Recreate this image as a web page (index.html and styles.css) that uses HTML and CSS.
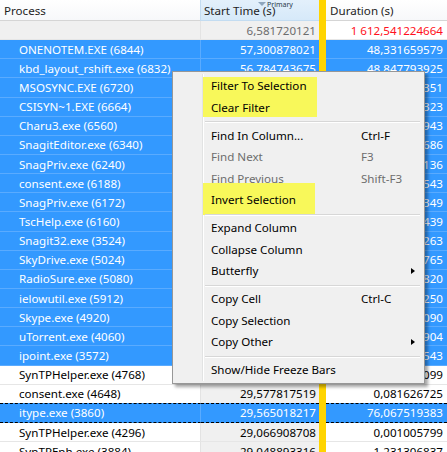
FILE: index.html
```html
<!DOCTYPE html>
<html>
<head>
<meta charset="utf-8">
<link rel="stylesheet" href="styles.css">
</head>
<body>
<div class="grid">
  <div class="hdr">
    <div class="c proc">Process</div>
    <div class="c start sorted">Start Time (s)<span class="sortind"><span class="tri"></span>Primary</span></div>
    <div class="freeze"></div>
    <div class="c dur">Duration (s)</div>
  </div>
  <div class="row summary">
    <div class="c proc"></div>
    <div class="c start num">6,581720121</div>
    <div class="freeze"></div>
    <div class="c dur num">1 612,541224664</div>
  </div>
  <div class="row sel"><div class="c proc">ONENOTEM.EXE (6844)</div><div class="c start num">57,300878021</div><div class="freeze"></div><div class="c dur num">48,331659579</div></div>
  <div class="row sel"><div class="c proc">kbd_layout_rshift.exe (6832)</div><div class="c start num">56,784743675</div><div class="freeze"></div><div class="c dur num">48,847793925</div></div>
  <div class="row sel"><div class="c proc">MSOSYNC.EXE (6720)</div><div class="c start num">56,412786530</div><div class="freeze"></div><div class="c dur num">49,219751351</div></div>
  <div class="row sel"><div class="c proc">CSISYN~1.EXE (6664)</div><div class="c start num">55,978120034</div><div class="freeze"></div><div class="c dur num">49,654417323</div></div>
  <div class="row sel"><div class="c proc">Charu3.exe (6560)</div><div class="c start num">53,817394260</div><div class="freeze"></div><div class="c dur num">51,815143943</div></div>
  <div class="row sel"><div class="c proc">SnagitEditor.exe (6340)</div><div class="c start num">50,104538112</div><div class="freeze"></div><div class="c dur num">55,527999686</div></div>
  <div class="row sel"><div class="c proc">SnagPriv.exe (6240)</div><div class="c start num">49,876012584</div><div class="freeze"></div><div class="c dur num">55,756525136</div></div>
  <div class="row sel"><div class="c proc">consent.exe (6188)</div><div class="c start num">48,511907326</div><div class="freeze"></div><div class="c dur num">1,093218543</div></div>
  <div class="row sel"><div class="c proc">SnagPriv.exe (6172)</div><div class="c start num">47,934201675</div><div class="freeze"></div><div class="c dur num">57,698335349</div></div>
  <div class="row sel"><div class="c proc">TscHelp.exe (6160)</div><div class="c start num">47,650883129</div><div class="freeze"></div><div class="c dur num">57,981654439</div></div>
  <div class="row sel"><div class="c proc">Snagit32.exe (3524)</div><div class="c start num">39,402716845</div><div class="freeze"></div><div class="c dur num">66,229820263</div></div>
  <div class="row sel"><div class="c proc">SkyDrive.exe (5024)</div><div class="c start num">36,715220409</div><div class="freeze"></div><div class="c dur num">68,917316765</div></div>
  <div class="row sel"><div class="c proc">RadioSure.exe (5080)</div><div class="c start num">35,118604377</div><div class="freeze"></div><div class="c dur num">70,513932820</div></div>
  <div class="row sel"><div class="c proc">ielowutil.exe (5912)</div><div class="c start num">33,260417998</div><div class="freeze"></div><div class="c dur num">72,372119250</div></div>
  <div class="row sel"><div class="c proc">Skype.exe (4920)</div><div class="c start num">32,870114502</div><div class="freeze"></div><div class="c dur num">72,762423090</div></div>
  <div class="row sel"><div class="c proc">uTorrent.exe (4060)</div><div class="c start num">31,447806211</div><div class="freeze"></div><div class="c dur num">74,184730904</div></div>
  <div class="row sel"><div class="c proc">ipoint.exe (3572)</div><div class="c start num">30,905543318</div><div class="freeze"></div><div class="c dur num">74,726993543</div></div>
  <div class="row"><div class="c proc">SynTPHelper.exe (4768)</div><div class="c start num">29,603419826</div><div class="freeze"></div><div class="c dur num">0,001043099</div></div>
  <div class="row"><div class="c proc">consent.exe (4648)</div><div class="c start num">29,577817519</div><div class="freeze"></div><div class="c dur num">0,081626725</div></div>
  <div class="row sel focus"><div class="c proc">itype.exe (3860)</div><div class="c start num">29,565018217</div><div class="freeze"></div><div class="c dur num">76,067519383</div></div>
  <div class="row"><div class="c proc">SynTPHelper.exe (4296)</div><div class="c start num">29,066908708</div><div class="freeze"></div><div class="c dur num">0,001005799</div></div>
  <div class="row"><div class="c proc">SynTPEnh.exe (3884)</div><div class="c start num">29,048893316</div><div class="freeze"></div><div class="c dur num">1,231306837</div></div>
</div>

<div class="menu">
  <div class="group mark">
    <div class="item"><span class="label">Filter To Selection</span></div>
    <div class="item"><span class="label">Clear Filter</span></div>
  </div>
  <div class="sep"></div>
  <div class="item"><span class="label">Find In Column...</span><span class="key">Ctrl-F</span></div>
  <div class="item dis"><span class="label">Find Next</span><span class="key">F3</span></div>
  <div class="item dis"><span class="label">Find Previous</span><span class="key">Shift-F3</span></div>
  <div class="group mark mark2">
    <div class="item"><span class="label">Invert Selection</span></div>
  </div>
  <div class="sep"></div>
  <div class="item"><span class="label">Expand Column</span></div>
  <div class="item"><span class="label">Collapse Column</span></div>
  <div class="item sub"><span class="label">Butterfly</span></div>
  <div class="sep"></div>
  <div class="item"><span class="label">Copy Cell</span><span class="key">Ctrl-C</span></div>
  <div class="item"><span class="label">Copy Selection</span></div>
  <div class="item sub"><span class="label">Copy Other</span></div>
  <div class="sep"></div>
  <div class="item"><span class="label">Show/Hide Freeze Bars</span></div>
</div>
</body>
</html>
```

FILE: styles.css
```css
html, body {
  margin: 0;
  padding: 0;
}
body {
  width: 447px;
  height: 452px;
  overflow: hidden;
  position: relative;
  background: #fff;
  font-family: "Noto Sans", "Open Sans", sans-serif;
  font-size: 11.6px;
  color: #000;
}

.grid {
  display: flex;
  flex-direction: column;
}

.hdr, .row {
  display: flex;
  flex: none;
}

.c {
  box-sizing: border-box;
  white-space: nowrap;
  overflow: hidden;
  display: flex;
  align-items: center;
}
.proc { width: 201px; border-right: 1px solid #e3e3e3; }
.start { width: 118px; }
.freeze { width: 7px; background: #ffd400; flex: none; }
.dur { width: 121px; }

.num { justify-content: flex-end; padding-right: 3px; }
.dur.num { padding-right: 4px; }

/* header */
.hdr { height: 21px; }
.hdr .c {
  height: 21px;
  background: linear-gradient(#ffffff, #f7f8fa);
  border-bottom: 1px solid #d5d5d5;
  padding-left: 4px;
  color: #1e1e1e;
}
.hdr .proc { border-right: 1px solid #e3e3e3; }
.hdr .start.sorted {
  background: linear-gradient(#e3f0fb, #d6e9f9);
  border-left: 1px solid #c3dcf1;
  border-bottom: 1px solid #c3dcf1;
  margin-left: -1px;
  width: 119px;
  padding-left: 3px;
  position: relative;
}
.hdr .dur { padding-left: 4px; }
.sortind {
  position: absolute;
  left: 57px;
  top: 0;
  font-size: 7px;
  line-height: 9px;
  color: #2a3a4a;
  display: flex;
  align-items: flex-start;
}
.tri {
  width: 0;
  height: 0;
  border-left: 4px solid transparent;
  border-right: 4px solid transparent;
  border-top: 4px solid #8ea6bd;
  margin-top: 2px;
  margin-right: 1px;
}

/* rows */
.row { height: 19.15px; }
.row .c {
  height: 19.15px;
  border-bottom: 1px solid #e6e6e6;
}
.row .proc { padding-left: 19px; background: #fff; }
.row .start { background: #f0f0f0; }
.row .dur { background: #fff; }

.summary .proc { background: #f0f0f0; }
.summary .start { color: #6d6d6d; }
.summary .dur { color: #ff1020; }

.row.sel .c {
  background: #3399ff;
  color: #fff;
  border-bottom-color: #5aabff;
}
.row.sel .proc { border-right-color: #5aabff; }

.row.focus .c {
  border-top: 1px dashed #000;
  border-bottom: 1px dashed #000;
}
.row.focus { margin-top: -1px; height: 20.15px; }
.row.focus .c { height: 20.15px; }

/* context menu */
.menu {
  position: absolute;
  left: 172px;
  top: 71px;
  width: 253px;
  box-sizing: border-box;
  background: #f0f0f0;
  border: 1px solid #979797;
  padding: 3px 2px 2px 2px;
  box-shadow: 3px 3px 3px rgba(0, 0, 0, 0.35);
  color: #000;
}
.menu::before {
  content: "";
  position: absolute;
  left: 29px;
  top: 2px;
  bottom: 2px;
  width: 1px;
  background: #e2e3e3;
  border-right: 1px solid #ffffff;
}
.group { position: relative; }
.mark::before {
  content: "";
  position: absolute;
  left: 28px;
  top: 2px;
  width: 114px;
  bottom: 1px;
  background: #f8f85a;
}
.mark2::before { width: 112px; top: -6px; bottom: -4px; }

.item {
  position: relative;
  display: flex;
  align-items: center;
  height: 21.5px;
  padding-left: 36px;
  white-space: nowrap;
}
.label { width: 150px; }
.item.dis { color: #6d6d6d; }
.item.sub::after {
  content: "";
  position: absolute;
  left: 236px;
  top: 8px;
  border-top: 3.5px solid transparent;
  border-bottom: 3.5px solid transparent;
  border-left: 4px solid #000;
}
.sep {
  height: 6.5px;
  margin-left: 30px;
  margin-right: 2px;
  position: relative;
}
.sep::before {
  content: "";
  position: absolute;
  left: 0;
  right: 0;
  top: 3px;
  height: 1px;
  background: #d7d7d7;
  border-bottom: 1px solid #fff;
}
```
